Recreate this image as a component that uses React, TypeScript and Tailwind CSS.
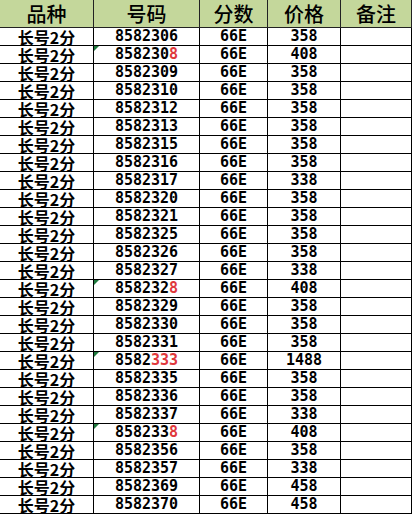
const rows: { tail: string; red?: string; price: string; flag?: boolean }[] = [
	{ tail: "306", price: "358" },
	{ tail: "30", red: "8", price: "408", flag: true },
	{ tail: "309", price: "358" },
	{ tail: "310", price: "358" },
	{ tail: "312", price: "358" },
	{ tail: "313", price: "358" },
	{ tail: "315", price: "358" },
	{ tail: "316", price: "358" },
	{ tail: "317", price: "338" },
	{ tail: "320", price: "358" },
	{ tail: "321", price: "358" },
	{ tail: "325", price: "358" },
	{ tail: "326", price: "358" },
	{ tail: "327", price: "338" },
	{ tail: "32", red: "8", price: "408", flag: true },
	{ tail: "329", price: "358" },
	{ tail: "330", price: "358" },
	{ tail: "331", price: "358" },
	{ tail: "", red: "333", price: "1488", flag: true },
	{ tail: "335", price: "358" },
	{ tail: "336", price: "358" },
	{ tail: "337", price: "338" },
	{ tail: "33", red: "8", price: "408", flag: true },
	{ tail: "356", price: "358" },
	{ tail: "357", price: "338" },
	{ tail: "369", price: "458" },
	{ tail: "370", price: "458" },
];

const cjk = "font-['Noto_Sans_CJK_SC',sans-serif]";
const mono = "font-['DejaVu_Sans_Mono',monospace]";

const headers = ["品种", "号码", "分数", "价格", "备注"];

export default function App() {
	return (
		<div className="w-[412px] h-[514px] bg-white overflow-hidden text-black">
			<div className="grid grid-cols-[94px_106px_68px_73px_71px]">
				{/* Header row */}
				{headers.map((h) => (
					<div
						key={h}
						className={`h-[28px] bg-[#c4d79b] border-r border-b border-[#222] flex items-center justify-center text-[20px] font-medium leading-none ${cjk}`}
					>
						{h}
					</div>
				))}

				{/* Data rows */}
				{rows.map((r, i) => (
					<div key={i} className="contents">
						<div
							className={`h-[18px] border-r border-b border-black flex items-center justify-center text-[16px] font-semibold leading-none ${cjk}`}
						>
							长号2分
						</div>
						<div
							className={`relative h-[18px] border-r border-b border-black flex items-center justify-center text-[15px] font-bold leading-none ${mono}`}
						>
							{r.flag && (
								<svg
									className="absolute left-0 top-0"
									width="5"
									height="5"
									viewBox="0 0 5 5"
								>
									<polygon points="0,0 5,0 0,5" fill="#1f7a3e" />
								</svg>
							)}
							<span>
								8582{r.tail}
								{r.red && <span className="text-[#e0383c]">{r.red}</span>}
							</span>
						</div>
						<div
							className={`h-[18px] border-r border-b border-black flex items-center justify-center text-[15px] font-bold leading-none ${mono}`}
						>
							66E
						</div>
						<div
							className={`h-[18px] border-r border-b border-black flex items-center justify-center text-[15px] font-bold leading-none ${mono}`}
						>
							{r.price}
						</div>
						<div className="h-[18px] border-r border-b border-black" />
					</div>
				))}
			</div>
		</div>
	);
}
